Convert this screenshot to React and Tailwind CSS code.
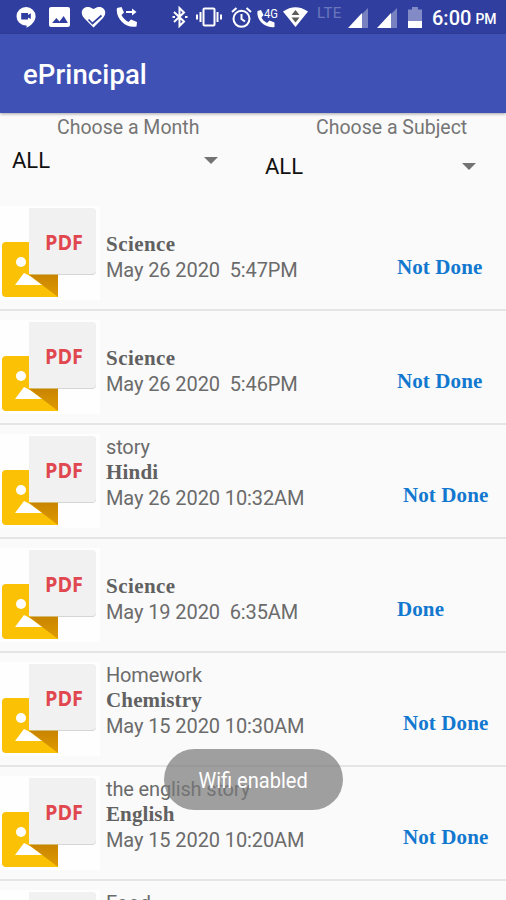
import clsx from 'clsx';

const homework = [
	{ title: '', subject: 'Science', date: 'May 26 2020  5:47PM', done: false },
	{ title: '', subject: 'Science', date: 'May 26 2020  5:46PM', done: false },
	{ title: 'story', subject: 'Hindi', date: 'May 26 2020 10:32AM', done: false },
	{ title: '', subject: 'Science', date: 'May 19 2020  6:35AM', done: true },
	{ title: 'Homework', subject: 'Chemistry', date: 'May 15 2020 10:30AM', done: false },
	{ title: 'the english story', subject: 'English', date: 'May 15 2020 10:20AM', done: false },
];

const subjectTracking = {
	Science: 'tracking-[0.45px]',
	Hindi: 'tracking-[0.2px]',
	Chemistry: 'tracking-[0.15px]',
	English: 'tracking-[0.1px]',
};

function Signal({ className }) {
	return (
		<svg viewBox="0 0 20 20" className={clsx('h-5 w-5 shrink-0', className)} fill="#fff">
			<path d="M14 6 L20 0 V20 H14 Z" opacity="0.35" />
			<path d="M0 20 L14 5 V20 Z" />
		</svg>
	);
}

function StatusBar() {
	return (
		<div className="flex h-[34px] shrink-0 items-center bg-[#303f9f] pl-4 text-white">
			{/* Hangouts */}
			<svg viewBox="0 0 20 21" className="h-[21px] w-5 shrink-0" fill="#fff">
				<path d="M10 0a9.5 9.2 0 0 1 9.6 9.2c0 5-4.4 9.4-9 11.5V18.4H10A9.5 9.2 0 0 1 10 0Z" />
				<path d="M5.2 6h6.8v2l2.8-1.7v5.8L12 10.5v2.1H5.2Z" fill="#303f9f" />
			</svg>
			{/* Gallery */}
			<svg viewBox="0 0 20 20" className="ml-[13px] h-5 w-[21px] shrink-0" preserveAspectRatio="none">
				<rect width="20" height="20" rx="2" fill="#fff" />
				<path d="M3 16l4-5 3 3.5 4-5.5 4 7Z" fill="#303f9f" />
			</svg>
			{/* Health */}
			<svg viewBox="0 0 25 22" className="ml-[11px] h-[22px] w-[25px] shrink-0">
				<path d="M12.5 21.5 3 12C-3 5 4-3 12.5 3 21-3 28 5 22 12Z" fill="#fff" />
				<path d="M7.5 13.5l4 4 9-8" fill="none" stroke="#303f9f" strokeWidth="1.7" />
			</svg>
			{/* Forwarded call */}
			<svg viewBox="0 0 22 22" className="ml-[10px] h-[22px] w-[22px] shrink-0" fill="#fff">
				<path d="M1 2 5.5 1 8 6.5 5.5 9c1.5 3 4 5.5 7 7l2.5-2.5L21 16l-.5 4.500C10 23-1 12 1 2Z" />
				<path d="M10 5h6V2.5L20.5 6 16 9.5V7h-6Z" />
			</svg>
			{/* Bluetooth */}
			<svg viewBox="0 0 16 22" className="ml-[34px] h-[22px] w-4 shrink-0" fill="none" stroke="#fff" strokeWidth="2">
				<path d="M2 6l10 9.5-4.500 4.500V2L12 6.500 2 16" />
				<path d="M.5 11h2.5M13 11h2.5" />
			</svg>
			{/* Vibrate */}
			<svg viewBox="0 0 26 20" className="ml-[8px] h-5 w-[26px] shrink-0" fill="none" stroke="#fff" strokeWidth="2">
				<rect x="7.5" y="1.5" width="11" height="17" rx="1" />
				<path d="M4.5 5v10M1 7.5v5M21.5 5v10M25 7.5v5" />
			</svg>
			{/* Alarm */}
			<svg viewBox="0 0 21 21" className="ml-[9px] h-[21px] w-[21px] shrink-0" fill="none" stroke="#fff" strokeWidth="2">
				<circle cx="10.5" cy="11.8" r="8" />
				<path d="M1 5l4.5-4M15.5 1 20 5M10.5 7v5l3.5 2.5" />
			</svg>
			{/* 4G call */}
			<svg viewBox="0 0 22 22" className="ml-[5px] h-[22px] w-[22px] shrink-0 overflow-visible" fill="#fff">
				<path d="M.5 5 4 4 6.5 9 4.5 11.5c1.2 2.5 3 4 5.5 5.500l2.5-2.5 5 2V21C8 22.5-1 14 .5 5Z" />
				<text x="7" y="12" fontSize="13" fontFamily="Roboto, sans-serif" textLength="14" lengthAdjust="spacingAndGlyphs">4G</text>
			</svg>
			{/* Wifi */}
			<svg viewBox="0 0 25 20" className="ml-[4px] h-5 w-[25px] shrink-0">
				<path d="M0 4.5Q12.5-4 25 4.5L12.5 20Z" fill="#fff" />
				<path d="M8.5 8 12.5 3l4 5ZM8.5 10.5h8l-4 5Z" fill="#5b5b59" />
			</svg>
			<span className="ml-[9px] -mt-[8px] w-[27px] font-[Roboto,sans-serif] text-[15px] leading-4 tracking-[0.4px] text-[#6b77bd]">LTE</span>
			<Signal className="ml-[4px] mt-[2px]" />
			<Signal className="ml-[9px] mt-[2px]" />
			{/* Battery */}
			<svg viewBox="0 0 14 21" className="ml-[11px] mt-px h-[21px] w-[14px] shrink-0" fill="#fff">
				<path d="M0 2.5h4V0h6v2.5h4V14H0Z" opacity="0.4" />
				<path d="M0 14h14v7H0Z" />
			</svg>
			<span className="ml-[10px] mt-[2px] font-[Roboto,sans-serif] text-[20px] font-medium">6:00</span>
			<span className="ml-[4px] mt-[5px] font-[Roboto,sans-serif] text-[14px] font-medium">PM</span>
		</div>
	);
}

function Arrow({ className }) {
	return (
		<svg viewBox="0 0 14 7" className={clsx('h-[7px] w-[14px]', className)} fill="#737373">
			<path d="M0 0h14L7 7Z" />
		</svg>
	);
}

function Filters() {
	return (
		<div className="flex h-[84px] shrink-0">
			<div className="w-[253px]">
				<div className="pl-[57px] pt-[3px] text-[19.5px] leading-6 text-[#757575]">Choose a Month</div>
				<div className="mt-[8px] flex h-[26px] items-center justify-between pl-3 pr-[35px]">
					<span className="text-[22px] leading-[26px] text-[#111]">ALL</span>
					<Arrow className="-mt-px" />
				</div>
			</div>
			<div className="w-[253px]">
				<div className="pl-[63px] pt-[3px] text-[19.5px] leading-6 text-[#757575]">Choose a Subject</div>
				<div className="mt-[14px] flex h-[26px] items-center justify-between pl-3 pr-[30px]">
					<span className="text-[22px] leading-[26px] text-[#111]">ALL</span>
					<Arrow className="-mt-[2px]" />
				</div>
			</div>
		</div>
	);
}

function PdfIcon() {
	return (
		<svg viewBox="0 0 100 94" className="mt-[9px] h-[94px] w-[100px] shrink-0">
			<defs>
				<linearGradient id="fold" x1="0" y1="0" x2="0" y2="1">
					<stop offset="0" stopColor="#c98500" />
					<stop offset="1" stopColor="#e09a00" />
				</linearGradient>
			</defs>
			<rect width="100" height="94" fill="#fefefe" />
			<path d="M6 36h52v55H6a4 4 0 0 1-4-4V40a4 4 0 0 1 4-4Z" fill="#fbc104" />
			<path d="M29 69h29v22Z" fill="url(#fold)" />
			<circle cx="21" cy="56" r="5" fill="#fff" />
			<path d="M15 79 24 67l6 3 12 9Z" fill="#fff" />
			<rect x="29" y="3" width="67" height="66" rx="4" fill="#b9b9b9" opacity="0.6" />
			<path d="M29 2h63a4 4 0 0 1 4 4v58a4 4 0 0 1-4 4H29Z" fill="#f1f1f1" />
			<text x="45" y="44" fontSize="21" fontFamily="Open Sans, sans-serif" fontWeight="700" fill="#e0474f" textLength="38" lengthAdjust="spacingAndGlyphs">PDF</text>
		</svg>
	);
}

function HomeworkRow({ item }) {
	return (
		<div className="flex h-[114px] shrink-0 border-b-2 border-[#e5e5e5]">
			<PdfIcon />
			<div className={clsx('shrink-0 pl-[6px] pt-[9px] text-[#6b6b6b]', item.title ? 'w-[303px]' : 'w-[297px]')}>
				<div className="h-[26px] text-[20px] leading-[26px] tracking-[-0.15px]">{item.title}</div>
				<div className={clsx('h-[25px] font-["Liberation_Serif",serif] text-[21px] leading-[25px] font-bold text-[#616161]', subjectTracking[item.subject])}>
					{item.subject}
				</div>
				<div className="h-[27px] whitespace-pre text-[20px] leading-[27px] tracking-[-0.1px]">{item.date}</div>
			</div>
			<div className="pt-[57px] font-['Liberation_Serif',serif] text-[21px] leading-[26px] font-bold tracking-[0.1px] text-[#1278cf]">
				{item.done ? 'Done' : 'Not Done'}
			</div>
		</div>
	);
}

export default function App() {
	return (
		<div className="relative flex h-[900px] w-[506px] flex-col overflow-hidden bg-[#fafafa] font-[Roboto,sans-serif]">
			<StatusBar />
			<div className="flex h-[79px] shrink-0 items-center bg-[#3f51b5] pl-[23px] shadow-[0_1px_3px_rgba(0,0,0,0.35)]">
				<h1 className="pt-[3px] text-[27.5px] font-medium tracking-[0.1px] text-white">ePrincipal</h1>
			</div>
			<Filters />
			<div className="flex flex-col">
				{homework.map((item, index) => (
					<HomeworkRow key={index} item={item} />
				))}
				{/* Next row, only its top edge is on screen */}
				<div className="flex h-[19px] shrink-0 overflow-hidden">
					<PdfIcon />
					<div className="pl-[6px] pt-[9px] text-[20px] leading-[26px] text-[#6b6b6b]">Food</div>
				</div>
			</div>

			{/* Toast */}
			<div className="absolute left-[164px] top-[749px] flex h-[61px] w-[179px] items-center justify-center rounded-[31px] bg-[#777777]/70">
				<span className="scale-x-[0.91] whitespace-nowrap pt-[2px] text-[22px] text-white">Wifi enabled</span>
			</div>
		</div>
	);
}
